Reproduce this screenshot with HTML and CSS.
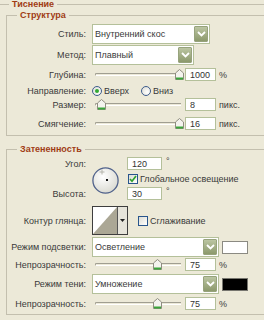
FILE: index.html
```html
<!DOCTYPE html>
<html lang="ru">
<head>
    <meta charset="UTF-8">
    <meta name="viewport" content="width=device-width, initial-scale=1.0">
    <title>Тиснение</title>
    <link rel="stylesheet" href="styles.css">
</head>
<body>
<div class="panel">
    <div class="title"><span>Тиснение</span></div>

    <fieldset class="group structure">
        <legend>Структура</legend>

        <div class="row r-style">
            <label>Стиль:</label>
            <div class="select w-style"><span>Внутренний скос</span><b class="drop"><svg width="9" height="6" viewBox="0 0 9 6"><path d="M1 1l3.5 3.5L8 1" stroke="#fff" stroke-width="1.8" fill="none"/></svg></b></div>
        </div>
        <div class="row r-method">
            <label>Метод:</label>
            <div class="select w-method"><span>Плавный</span><b class="drop"><svg width="9" height="6" viewBox="0 0 9 6"><path d="M1 1l3.5 3.5L8 1" stroke="#fff" stroke-width="1.8" fill="none"/></svg></b></div>
        </div>
        <div class="row r-field r-depth">
            <label>Глубина:</label>
            <div class="ctl">
                <div class="slider"><svg class="thumb" style="--v: 1" width="9" height="11" viewBox="0 0 9 11"><path d="M0.5 10.5V4L4.5 0.5L8.5 4V10.5Z" fill="#f4f3ee" stroke="#8e8d80"/><path d="M1 9.5H8" stroke="#3aa53a" stroke-width="2"/></svg></div>
                <input class="num" value="1000"><span class="unit">%</span>
            </div>
        </div>
        <div class="row r-dir">
            <label>Направление:</label>
            <div class="ctl">
                <span class="opt first"><i class="radio on"></i>Вверх</span>
                <span class="opt"><i class="radio"></i>Вниз</span>
            </div>
        </div>
        <div class="row r-field r-size">
            <label>Размер:</label>
            <div class="ctl">
                <div class="slider"><svg class="thumb" style="--v: .03" width="9" height="11" viewBox="0 0 9 11"><path d="M0.5 10.5V4L4.5 0.5L8.5 4V10.5Z" fill="#f4f3ee" stroke="#8e8d80"/><path d="M1 9.5H8" stroke="#3aa53a" stroke-width="2"/></svg></div>
                <input class="num" value="8"><span class="unit">пикс.</span>
            </div>
        </div>
        <div class="row r-field r-soft">
            <label>Смягчение:</label>
            <div class="ctl">
                <div class="slider"><svg class="thumb" style="--v: 1" width="9" height="11" viewBox="0 0 9 11"><path d="M0.5 10.5V4L4.5 0.5L8.5 4V10.5Z" fill="#f4f3ee" stroke="#8e8d80"/><path d="M1 9.5H8" stroke="#3aa53a" stroke-width="2"/></svg></div>
                <input class="num" value="16"><span class="unit">пикс.</span>
            </div>
        </div>
    </fieldset>

    <fieldset class="group shading">
        <legend>Затененность</legend>

        <div class="angle">
            <label class="l-angle">Угол:</label>
            <svg class="dial" width="27" height="27" viewBox="0 0 27 27">
                <defs>
                    <radialGradient id="dialfill" cx="40%" cy="35%" r="75%">
                        <stop offset="0" stop-color="#ffffff"/>
                        <stop offset="1" stop-color="#d6d6cd"/>
                    </radialGradient>
                </defs>
                <circle cx="13.5" cy="13.5" r="12.6" fill="url(#dialfill)" stroke="#50628b" stroke-width="1.3"/>
                <path d="M10 2.5v5M7.5 5h5" stroke="#b5b5ac"/>
                <rect x="14" y="12" width="2" height="2" fill="#111"/>
            </svg>
            <div class="deg v-angle"><input class="num wide" value="120"><span class="unit">°</span></div>
            <span class="check global"><i class="box"><svg width="8" height="8" viewBox="0 0 8 8"><path d="M1 4l2 2.2L7 1" stroke="#2da12d" stroke-width="1.7" fill="none"/></svg></i>Глобальное освещение</span>
            <label class="l-alt">Высота:</label>
            <div class="deg v-alt"><input class="num wide" value="30"><span class="unit">°</span></div>
        </div>

        <div class="row r-contour">
            <label>Контур глянца:</label>
            <div class="ctl">
                <svg class="contour" width="36" height="29" viewBox="0 0 36 29">
                    <rect x="0.5" y="0.5" width="35" height="28" fill="#e6e4da" stroke="#3e3e3e"/>
                    <path d="M1 1H25V28H1Z" fill="#fff"/>
                    <path d="M1 28L25 1V28Z" fill="#aba795"/>
                    <path d="M25.5 1V28" stroke="#555"/>
                    <path d="M28 13h5l-2.5 3z" fill="#222"/>
                </svg>
                <span class="check smooth"><i class="box"></i>Сглаживание</span>
            </div>
        </div>
        <div class="row r-mode">
            <label>Режим подсветки:</label>
            <div class="ctl">
                <div class="select w-mode"><span>Осветление</span><b class="drop"><svg width="9" height="6" viewBox="0 0 9 6"><path d="M1 1l3.5 3.5L8 1" stroke="#fff" stroke-width="1.8" fill="none"/></svg></b></div>
                <i class="swatch"></i>
            </div>
        </div>
        <div class="row r-field r-op1">
            <label>Непрозрачность:</label>
            <div class="ctl">
                <div class="slider"><svg class="thumb" style="--v: .72" width="9" height="11" viewBox="0 0 9 11"><path d="M0.5 10.5V4L4.5 0.5L8.5 4V10.5Z" fill="#f4f3ee" stroke="#8e8d80"/><path d="M1 9.5H8" stroke="#3aa53a" stroke-width="2"/></svg></div>
                <input class="num" value="75"><span class="unit">%</span>
            </div>
        </div>
        <div class="row r-mode r-shadow">
            <label>Режим тени:</label>
            <div class="ctl">
                <div class="select w-mode"><span>Умножение</span><b class="drop"><svg width="9" height="6" viewBox="0 0 9 6"><path d="M1 1l3.5 3.5L8 1" stroke="#fff" stroke-width="1.8" fill="none"/></svg></b></div>
                <i class="swatch black"></i>
            </div>
        </div>
        <div class="row r-field r-op2">
            <label>Непрозрачность:</label>
            <div class="ctl">
                <div class="slider"><svg class="thumb" style="--v: .72" width="9" height="11" viewBox="0 0 9 11"><path d="M0.5 10.5V4L4.5 0.5L8.5 4V10.5Z" fill="#f4f3ee" stroke="#8e8d80"/><path d="M1 9.5H8" stroke="#3aa53a" stroke-width="2"/></svg></div>
                <input class="num" value="75"><span class="unit">%</span>
            </div>
        </div>
    </fieldset>
</div>
</body>
</html>
```

FILE: styles.css
```css
body {
    margin: 0;
    background: #ece9d8;
    font-family: "Liberation Sans", Arial, sans-serif;
    font-size: 9px;
    color: #3a3a3a;
    overflow: hidden;
}
.panel {
    width: 264px;
    height: 320px;
    overflow: hidden;
}
.title {
    display: flex;
    align-items: center;
    height: 9px;
}
.title::before,
.title::after {
    content: "";
    border-top: 1px solid #c3bfae;
}
.title::before { width: 9px; }
.title::after { flex: 1; }
.title span {
    padding: 0 3px;
    font-weight: bold;
    color: #a03c14;
    line-height: 9px;
}

/* group boxes */
.group {
    margin: 1px 0 0 6px;
    padding: 4px 0 5px;
    width: 320px;
    min-width: 0;
    box-sizing: border-box;
    border: 1px solid #c3bfae;
    border-right: 0;
}
.group legend {
    margin-left: 10px;
    padding: 0 3px;
    font-weight: bold;
    color: #a03c14;
    line-height: 10px;
}
.shading {
    margin-top: 8px;
    padding: 3px 0 4px;
}

/* rows */
.row {
    display: grid;
    grid-template-columns: 81px auto;
    column-gap: 4px;
    align-items: center;
}
.row > label,
.angle > label {
    text-align: right;
    padding-right: 2px;
    white-space: nowrap;
}
.ctl {
    display: flex;
    align-items: center;
}
.r-style { height: 20px; margin-bottom: 1px; }
.r-method { height: 20px; margin-bottom: 3px; }
.r-depth { height: 13px; margin-bottom: 4px; }
.r-dir { height: 12px; margin-bottom: 1px; }
.r-size { height: 13px; margin-bottom: 6px; }
.r-soft { height: 13px; }
.r-contour { height: 29px; margin-bottom: 2px; }
.r-mode { height: 20px; margin-bottom: 1px; }
.r-op1 { height: 13px; margin-bottom: 3px; }
.r-shadow { margin-bottom: 3px; }
.r-op2 { height: 13px; }

/* select */
.select {
    display: flex;
    align-items: center;
    height: 20px;
    box-sizing: border-box;
    border: 1px solid #b4c09a;
    background: #fff;
    padding: 1px;
}
.select span {
    flex: 1;
    padding-left: 1px;
    white-space: nowrap;
    overflow: hidden;
}
.drop {
    width: 14px;
    align-self: stretch;
    display: flex;
    align-items: center;
    justify-content: center;
    box-sizing: border-box;
    border: 1px solid #97a37c;
    border-radius: 1px;
    background: linear-gradient(#bbc5a2, #8c996c);
}
.w-style { width: 118px; }
.w-method { width: 102px; }
.w-mode { width: 127px; }

/* number fields */
.num {
    width: 31px;
    height: 13px;
    box-sizing: border-box;
    margin: 0 0 0 2px;
    padding: 0 0 0 4px;
    border: 1px solid #b4c09a;
    background: #fff;
    font: inherit;
    color: #333;
}
.num.wide {
    width: 35px;
    margin: 0;
}
.unit { margin-left: 3px; }

/* slider */
.slider {
    position: relative;
    width: 88px;
    height: 13px;
    margin-left: 3px;
}
.slider::before {
    content: "";
    position: absolute;
    left: 0;
    top: 5px;
    width: 85px;
    height: 1px;
    border-top: 1px solid #a09e91;
    border-bottom: 1px solid #fff;
    border-left: 1px solid #a09e91;
    border-radius: 2px 0 0 2px;
}
.thumb {
    position: absolute;
    top: 1px;
    left: calc(var(--v) * 80px);
}

/* radios and checkboxes */
.opt {
    display: flex;
    align-items: center;
}
.opt.first { width: 49px; }
.radio {
    display: flex;
    align-items: center;
    justify-content: center;
    width: 10px;
    height: 10px;
    box-sizing: border-box;
    margin-right: 2px;
    border: 1px solid #3d5c8c;
    border-radius: 50%;
    background: radial-gradient(circle at 65% 65%, #fff, #dadad1);
}
.radio.on::after {
    content: "";
    width: 4px;
    height: 4px;
    border-radius: 50%;
    background: #33a833;
}
.check {
    display: flex;
    align-items: center;
    white-space: nowrap;
}
.box {
    display: flex;
    align-items: center;
    justify-content: center;
    width: 10px;
    height: 10px;
    box-sizing: border-box;
    margin-right: 2px;
    border: 1px solid #28558c;
    background: linear-gradient(135deg, #dcdcd4, #fff);
}

/* angle block */
.angle {
    display: grid;
    grid-template-columns: 81px 31px auto;
    grid-template-rows: 13px 17px 13px;
    grid-template-areas:
        "la dial v1"
        ". dial chk"
        "lb dial v2";
    column-gap: 4px;
    align-items: center;
    margin-bottom: 6px;
}
.l-angle { grid-area: la; }
.l-alt { grid-area: lb; }
.dial {
    grid-area: dial;
    align-self: start;
    margin-top: 10px;
}
.v-angle { grid-area: v1; }
.v-alt { grid-area: v2; }
.global { grid-area: chk; margin-left: 1px; }
.deg {
    display: flex;
    align-items: flex-start;
    height: 13px;
}
.deg .unit { line-height: 8px; margin-left: 4px; }

.contour { display: block; }
.smooth { margin-left: 10px; }

.swatch {
    width: 26px;
    height: 13px;
    box-sizing: border-box;
    margin-left: 3px;
    border: 1px solid #8b8a82;
    background: #fff;
}
.swatch.black {
    background: #000;
    border-color: #77766f;
}
```
